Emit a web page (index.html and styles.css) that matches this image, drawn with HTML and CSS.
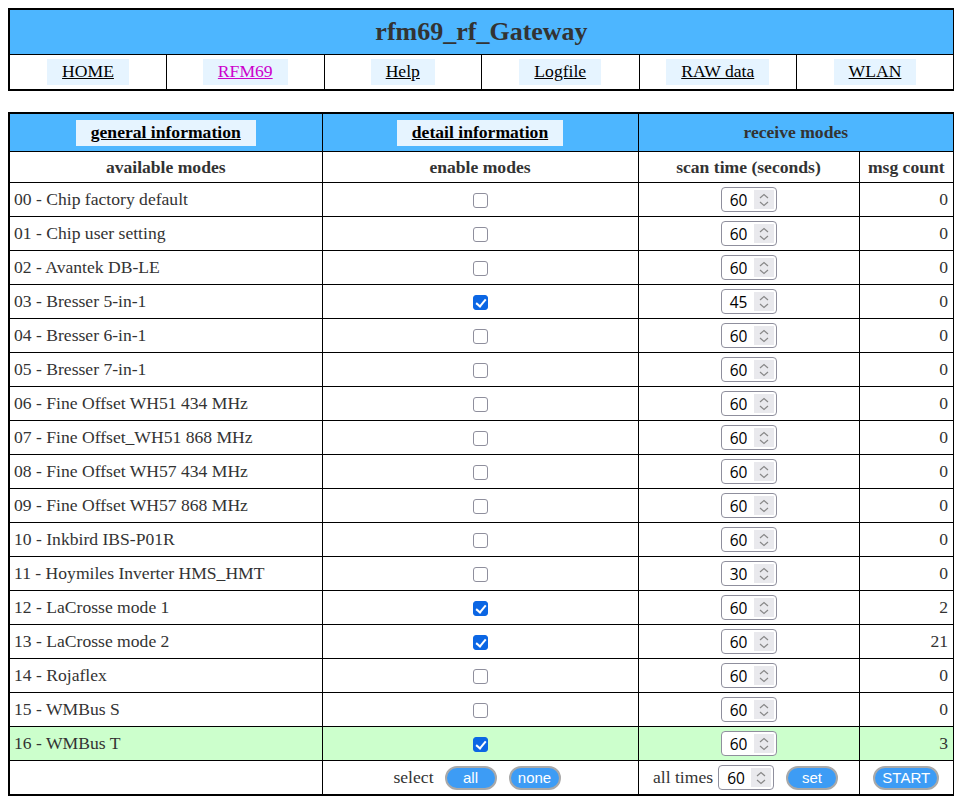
FILE: index.html
```html
<!DOCTYPE html>
<html>
<head>
<meta charset="utf-8">
<title>rfm69_rf_Gateway</title>
<link rel="stylesheet" href="styles.css">
</head>
<body>
<table class="nav">
  <tr><td class="title" colspan="6">rfm69_rf_Gateway</td></tr>
  <tr class="navrow">
    <td><a class="btnlink" href="#">HOME</a></td>
    <td><a class="btnlink visited" href="#">RFM69</a></td>
    <td><a class="btnlink" href="#">Help</a></td>
    <td><a class="btnlink" href="#">Logfile</a></td>
    <td><a class="btnlink" href="#">RAW data</a></td>
    <td><a class="btnlink" href="#">WLAN</a></td>
  </tr>
</table>

<table class="modes">
  <colgroup><col class="c1"><col class="c2"><col class="c3"><col class="c4"></colgroup>
  <tr class="head">
    <th><a class="btnlink bold" href="#">general information</a></th>
    <th><a class="btnlink bold" href="#">detail information</a></th>
    <th colspan="2">receive modes</th>
  </tr>
  <tr class="sub">
    <th>available modes</th>
    <th>enable modes</th>
    <th>scan time (seconds)</th>
    <th>msg count</th>
  </tr>
  <tr><td>00 - Chip factory default</td><td class="ctr"><input type="checkbox" class="cb"></td><td class="ctr"><span class="num"><input type="text" value="60"><span class="spin"><svg viewBox="0 0 20 20" width="20" height="20"><path d="M6 8 L10 4.5 L14 8 M6 12 L10 15.5 L14 12" fill="none" stroke="#888" stroke-width="1.2"/></svg></span></span></td><td class="cnt">0</td></tr>
  <tr><td>01 - Chip user setting</td><td class="ctr"><input type="checkbox" class="cb"></td><td class="ctr"><span class="num"><input type="text" value="60"><span class="spin"><svg viewBox="0 0 20 20" width="20" height="20"><path d="M6 8 L10 4.5 L14 8 M6 12 L10 15.5 L14 12" fill="none" stroke="#888" stroke-width="1.2"/></svg></span></span></td><td class="cnt">0</td></tr>
  <tr><td>02 - Avantek DB-LE</td><td class="ctr"><input type="checkbox" class="cb"></td><td class="ctr"><span class="num"><input type="text" value="60"><span class="spin"><svg viewBox="0 0 20 20" width="20" height="20"><path d="M6 8 L10 4.5 L14 8 M6 12 L10 15.5 L14 12" fill="none" stroke="#888" stroke-width="1.2"/></svg></span></span></td><td class="cnt">0</td></tr>
  <tr><td>03 - Bresser 5-in-1</td><td class="ctr"><input type="checkbox" class="cb" checked></td><td class="ctr"><span class="num"><input type="text" value="45"><span class="spin"><svg viewBox="0 0 20 20" width="20" height="20"><path d="M6 8 L10 4.5 L14 8 M6 12 L10 15.5 L14 12" fill="none" stroke="#888" stroke-width="1.2"/></svg></span></span></td><td class="cnt">0</td></tr>
  <tr><td>04 - Bresser 6-in-1</td><td class="ctr"><input type="checkbox" class="cb"></td><td class="ctr"><span class="num"><input type="text" value="60"><span class="spin"><svg viewBox="0 0 20 20" width="20" height="20"><path d="M6 8 L10 4.5 L14 8 M6 12 L10 15.5 L14 12" fill="none" stroke="#888" stroke-width="1.2"/></svg></span></span></td><td class="cnt">0</td></tr>
  <tr><td>05 - Bresser 7-in-1</td><td class="ctr"><input type="checkbox" class="cb"></td><td class="ctr"><span class="num"><input type="text" value="60"><span class="spin"><svg viewBox="0 0 20 20" width="20" height="20"><path d="M6 8 L10 4.5 L14 8 M6 12 L10 15.5 L14 12" fill="none" stroke="#888" stroke-width="1.2"/></svg></span></span></td><td class="cnt">0</td></tr>
  <tr><td>06 - Fine Offset WH51 434 MHz</td><td class="ctr"><input type="checkbox" class="cb"></td><td class="ctr"><span class="num"><input type="text" value="60"><span class="spin"><svg viewBox="0 0 20 20" width="20" height="20"><path d="M6 8 L10 4.5 L14 8 M6 12 L10 15.5 L14 12" fill="none" stroke="#888" stroke-width="1.2"/></svg></span></span></td><td class="cnt">0</td></tr>
  <tr><td>07 - Fine Offset_WH51 868 MHz</td><td class="ctr"><input type="checkbox" class="cb"></td><td class="ctr"><span class="num"><input type="text" value="60"><span class="spin"><svg viewBox="0 0 20 20" width="20" height="20"><path d="M6 8 L10 4.5 L14 8 M6 12 L10 15.5 L14 12" fill="none" stroke="#888" stroke-width="1.2"/></svg></span></span></td><td class="cnt">0</td></tr>
  <tr><td>08 - Fine Offset WH57 434 MHz</td><td class="ctr"><input type="checkbox" class="cb"></td><td class="ctr"><span class="num"><input type="text" value="60"><span class="spin"><svg viewBox="0 0 20 20" width="20" height="20"><path d="M6 8 L10 4.5 L14 8 M6 12 L10 15.5 L14 12" fill="none" stroke="#888" stroke-width="1.2"/></svg></span></span></td><td class="cnt">0</td></tr>
  <tr><td>09 - Fine Offset WH57 868 MHz</td><td class="ctr"><input type="checkbox" class="cb"></td><td class="ctr"><span class="num"><input type="text" value="60"><span class="spin"><svg viewBox="0 0 20 20" width="20" height="20"><path d="M6 8 L10 4.5 L14 8 M6 12 L10 15.5 L14 12" fill="none" stroke="#888" stroke-width="1.2"/></svg></span></span></td><td class="cnt">0</td></tr>
  <tr><td>10 - Inkbird IBS-P01R</td><td class="ctr"><input type="checkbox" class="cb"></td><td class="ctr"><span class="num"><input type="text" value="60"><span class="spin"><svg viewBox="0 0 20 20" width="20" height="20"><path d="M6 8 L10 4.5 L14 8 M6 12 L10 15.5 L14 12" fill="none" stroke="#888" stroke-width="1.2"/></svg></span></span></td><td class="cnt">0</td></tr>
  <tr><td>11 - Hoymiles Inverter HMS_HMT</td><td class="ctr"><input type="checkbox" class="cb"></td><td class="ctr"><span class="num"><input type="text" value="30"><span class="spin"><svg viewBox="0 0 20 20" width="20" height="20"><path d="M6 8 L10 4.5 L14 8 M6 12 L10 15.5 L14 12" fill="none" stroke="#888" stroke-width="1.2"/></svg></span></span></td><td class="cnt">0</td></tr>
  <tr><td>12 - LaCrosse mode 1</td><td class="ctr"><input type="checkbox" class="cb" checked></td><td class="ctr"><span class="num"><input type="text" value="60"><span class="spin"><svg viewBox="0 0 20 20" width="20" height="20"><path d="M6 8 L10 4.5 L14 8 M6 12 L10 15.5 L14 12" fill="none" stroke="#888" stroke-width="1.2"/></svg></span></span></td><td class="cnt">2</td></tr>
  <tr><td>13 - LaCrosse mode 2</td><td class="ctr"><input type="checkbox" class="cb" checked></td><td class="ctr"><span class="num"><input type="text" value="60"><span class="spin"><svg viewBox="0 0 20 20" width="20" height="20"><path d="M6 8 L10 4.5 L14 8 M6 12 L10 15.5 L14 12" fill="none" stroke="#888" stroke-width="1.2"/></svg></span></span></td><td class="cnt">21</td></tr>
  <tr><td>14 - Rojaflex</td><td class="ctr"><input type="checkbox" class="cb"></td><td class="ctr"><span class="num"><input type="text" value="60"><span class="spin"><svg viewBox="0 0 20 20" width="20" height="20"><path d="M6 8 L10 4.5 L14 8 M6 12 L10 15.5 L14 12" fill="none" stroke="#888" stroke-width="1.2"/></svg></span></span></td><td class="cnt">0</td></tr>
  <tr><td>15 - WMBus S</td><td class="ctr"><input type="checkbox" class="cb"></td><td class="ctr"><span class="num"><input type="text" value="60"><span class="spin"><svg viewBox="0 0 20 20" width="20" height="20"><path d="M6 8 L10 4.5 L14 8 M6 12 L10 15.5 L14 12" fill="none" stroke="#888" stroke-width="1.2"/></svg></span></span></td><td class="cnt">0</td></tr>
  <tr class="active"><td>16 - WMBus T</td><td class="ctr"><input type="checkbox" class="cb" checked></td><td class="ctr"><span class="num"><input type="text" value="60"><span class="spin"><svg viewBox="0 0 20 20" width="20" height="20"><path d="M6 8 L10 4.5 L14 8 M6 12 L10 15.5 L14 12" fill="none" stroke="#888" stroke-width="1.2"/></svg></span></span></td><td class="cnt">3</td></tr>
  <tr class="foot">
    <td></td>
    <td class="ctr"><span class="lbl">select</span><button class="pill">all</button><button class="pill">none</button></td>
    <td class="ctr"><span class="lbl">all times</span><span class="num"><input type="text" value="60"><span class="spin"><svg viewBox="0 0 20 20" width="20" height="20"><path d="M6 8 L10 4.5 L14 8 M6 12 L10 15.5 L14 12" fill="none" stroke="#888" stroke-width="1.2"/></svg></span></span><button class="pill set">set</button></td>
    <td class="ctr"><button class="pill">START</button></td>
  </tr>
</table>
</body>
</html>
```
FILE: styles.css
```css
body {
  margin: 8px;
  font-family: "Liberation Serif", "Times New Roman", serif;
  font-size: 17.6px;
  color: #333;
  background: #fff;
}
table {
  border-collapse: collapse;
  width: 947px;
  border: 2px solid #000;
  table-layout: fixed;
}
td, th {
  border: 1px solid #000;
  padding: 0;
}
.nav .title {
  background: #4db6ff;
  height: 44px;
  text-align: center;
  font-size: 26px;
  font-weight: bold;
  color: #333;
}
.navrow td {
  height: 34px;
  text-align: center;
}
.btnlink {
  display: inline-block;
  padding: 2px 15px 3px;
  line-height: 21px;
  background: #e6f4ff;
  color: #000;
  text-decoration: underline;
}
.btnlink.visited { color: #cc00cc; }
.btnlink.bold { font-weight: bold; }

.modes { margin-top: 21px; }
.c1 { width: 313px; }
.c2 { width: 316px; }
.c3 { width: 221px; }
.c4 { width: 95px; }

.head th {
  background: #4db6ff;
  height: 37px;
  color: #333;
}
.sub th {
  height: 30px;
  color: #333;
}
.modes td {
  height: 33px;
  padding-left: 4px;
  white-space: nowrap;
}
.modes td.ctr { text-align: center; padding-left: 0; }
.modes td.cnt { text-align: right; padding-right: 5px; padding-left: 0; }
.active td { background: #ccffcc; }

.cb {
  -webkit-appearance: none;
  appearance: none;
  width: 15px;
  height: 15px;
  margin: 0;
  border: 1px solid #8f8f9d;
  border-radius: 3px;
  background: #fff;
  vertical-align: middle;
  position: relative;
}
.cb:checked {
  background: #0b66e4;
  border-color: #0b66e4;
}
.cb:checked::after {
  content: "";
  position: absolute;
  left: 4px;
  top: 1px;
  width: 4px;
  height: 8px;
  border: solid #fff;
  border-width: 0 2px 2px 0;
  transform: rotate(40deg);
}

.num {
  display: inline-flex;
  align-items: center;
  width: 56px;
  height: 25px;
  box-sizing: border-box;
  border: 1px solid #8f8f9d;
  border-radius: 4px;
  background: #fff;
  vertical-align: middle;
  padding: 2px 3px 2px 2px;
}
.num input {
  width: 30px;
  border: 0;
  padding: 0;
  margin: 0;
  font-family: "Open Sans", "Noto Sans", sans-serif;
  font-size: 15.5px;
  color: #000;
  text-align: center;
  background: transparent;
  outline: none;
}
.spin {
  display: flex;
  align-items: center;
  justify-content: center;
  width: 20px;
  height: 19px;
  background: #e9e9ed;
  margin-left: auto;
}
.spin svg { display: block; }

.foot td { height: 33px; }
.lbl { vertical-align: middle; margin-right: 5px; }
.pill {
  font-family: "Liberation Sans", Arial, sans-serif;
  font-size: 15px;
  color: #fff;
  background: #3d9cf5;
  border: 2px solid #a9a9a9;
  border-radius: 12px;
  height: 24px;
  min-width: 52px;
  padding: 0 7px;
  margin: 0 6px;
  vertical-align: middle;
}
.foot .num { margin-right: 6px; }
```
